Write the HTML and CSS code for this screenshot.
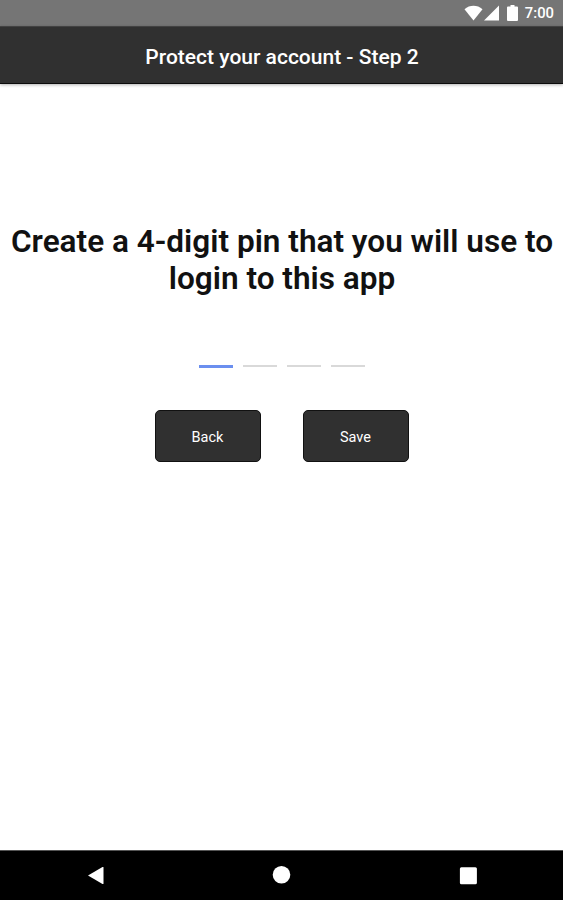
FILE: index.html
```html
<!DOCTYPE html>
<html lang="en">

<head>
  <meta charset="utf-8">
  <meta name="viewport" content="width=device-width, initial-scale=1.0">
  <title>Protect your account</title>
  <link rel="stylesheet" href="styles.css">
</head>

<body>

  <div class="status-bar">
    <svg class="wifi" width="19" height="16" viewBox="0 0 20 16" preserveAspectRatio="none">
      <path d="M0.5 4.2 C6 -0.3 14 -0.3 19.5 4.2 L10 15.5 Z" fill="#fff"/>
    </svg>
    <svg class="signal" width="15" height="16" viewBox="0 0 15 16">
      <path d="M15 0.5 V15.5 H0 Z" fill="#fff"/>
    </svg>
    <svg class="battery" width="11" height="16" viewBox="0 0 11 16">
      <path d="M3.5 0 H7.5 V1.6 H10 Q11 1.6 11 2.6 V15 Q11 16 10 16 H1 Q0 16 0 15 V2.6 Q0 1.6 1 1.6 H3.5 Z" fill="#fff"/>
    </svg>
    <span class="time">7:00</span>
  </div>

  <header class="header">
    <h1>Protect your account - Step 2</h1>
  </header>

  <main class="content">
    <h2>Create a 4-digit pin that you will use to login to this app</h2>

    <!-- One line for each digit of the pin -->
    <div class="pin">
      <span class="digit active"></span>
      <span class="digit"></span>
      <span class="digit"></span>
      <span class="digit"></span>
    </div>

    <div class="buttons">
      <button type="button">Back</button>
      <button type="button">Save</button>
    </div>
  </main>

  <nav class="nav-bar">
    <svg width="20" height="20" viewBox="0 0 20 20">
      <path d="M3 10.5 L17.5 2 Q18.5 1.6 18.5 2.6 V18.4 Q18.5 19.4 17.5 19 Z" fill="#fff"/>
    </svg>
    <svg width="20" height="20" viewBox="0 0 20 20">
      <circle cx="9.5" cy="9.7" r="8.8" fill="#fff"/>
    </svg>
    <svg width="20" height="20" viewBox="0 0 20 20">
      <rect x="1.9" y="2.2" width="17" height="17" rx="1.5" fill="#fff"/>
    </svg>
  </nav>

</body>

</html>
```

FILE: styles.css
```css
* {
  box-sizing: border-box;
}

body {
  margin: 0;
  height: 100vh;
  display: flex;
  flex-direction: column;
  background-color: #ffffff;
  font-family: Roboto, sans-serif;
}

.status-bar {
  height: 26px;
  padding-right: 9px;
  display: flex;
  align-items: center;
  justify-content: flex-end;
  background-color: #757575;
  color: #ffffff;
}

.signal {
  margin-left: 1px;
}

.battery {
  margin-left: 8px;
}

.time {
  margin-left: 7px;
  font-size: 14.8px;
  font-weight: 500;
  line-height: 26px;
}

.header {
  height: 58px;
  display: flex;
  align-items: center;
  justify-content: center;
  background-color: #303030;
  border-top: 1px solid #424242;
  border-bottom: 1px solid #0c0c0c;
  box-shadow: 0 1px 3px rgba(0, 0, 0, 0.3);
}

h1 {
  margin: 3px 0 0 1px;
  color: #ffffff;
  font-size: 21px;
  font-weight: 500;
}

.content {
  flex: 1;
  padding-top: 139px;
  display: flex;
  flex-direction: column;
  align-items: center;
}

h2 {
  margin: 0;
  padding: 0 7px 0 8px;
  color: #111111;
  font-size: 31.55px;
  font-weight: 600;
  line-height: 37px;
  text-align: center;
}

.pin {
  margin-top: 68px;
  display: flex;
  gap: 10px;
}

.digit {
  width: 34px;
  height: 2px;
  background-color: #d9d9d9;
}

/* The digit that is being typed: */

.digit.active {
  height: 3px;
  background-color: #6b8fef;
}

.buttons {
  margin-top: 42px;
  display: flex;
  gap: 42px;
}

button {
  width: 106px;
  height: 52px;
  padding: 2px 0 0;
  background-color: #303030;
  color: #ffffff;
  border: 1px solid #111111;
  border-radius: 5px;
  font-family: Roboto, sans-serif;
  font-size: 14.5px;
  cursor: pointer;
}

.nav-bar {
  height: 50px;
  padding: 0 85px 2px;
  display: flex;
  align-items: center;
  justify-content: space-between;
  background-color: #000000;
  border-top: 1px solid #555555;
}
```
